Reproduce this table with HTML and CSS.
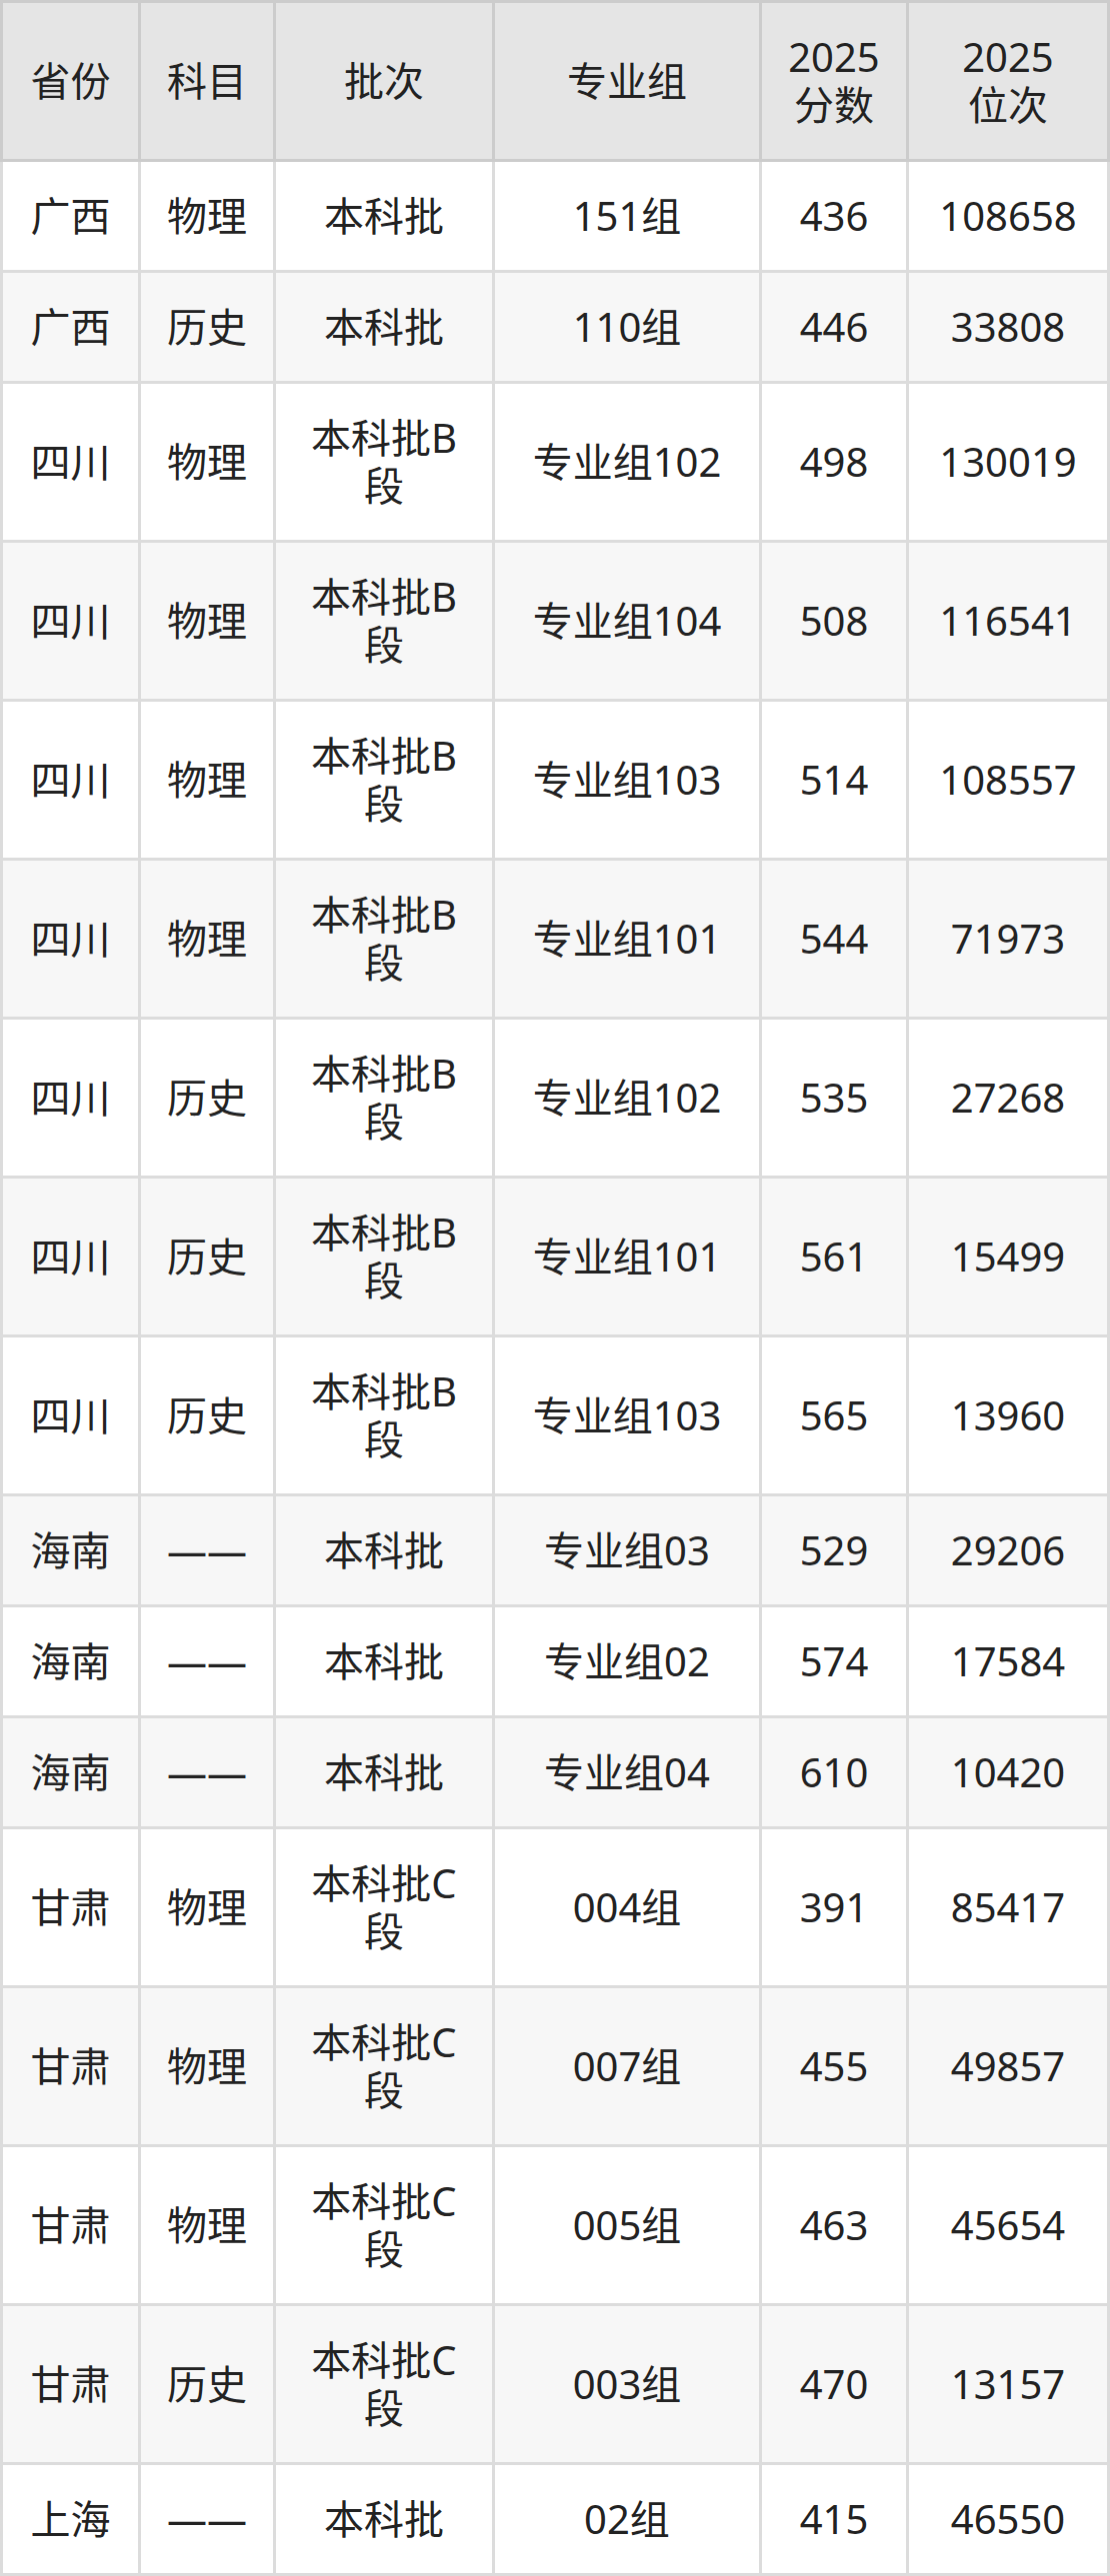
FILE: index.html
```html
<!DOCTYPE html>
<html lang="zh-CN">
<head>
<meta charset="utf-8">
<title>分数线</title>
<link rel="stylesheet" href="styles.css">
</head>
<body>
<table class="score-table">
  <colgroup>
    <col class="c-prov">
    <col class="c-subj">
    <col class="c-batch">
    <col class="c-group">
    <col class="c-score">
    <col class="c-rank">
  </colgroup>
  <thead>
    <tr>
      <th>省份</th>
      <th>科目</th>
      <th>批次</th>
      <th>专业组</th>
      <th>2025<br>分数</th>
      <th>2025<br>位次</th>
    </tr>
  </thead>
  <tbody>
    <tr><td>广西</td><td>物理</td><td>本科批</td><td>151组</td><td>436</td><td>108658</td></tr>
    <tr><td>广西</td><td>历史</td><td>本科批</td><td>110组</td><td>446</td><td>33808</td></tr>
    <tr><td>四川</td><td>物理</td><td>本科批B段</td><td>专业组102</td><td>498</td><td>130019</td></tr>
    <tr><td>四川</td><td>物理</td><td>本科批B段</td><td>专业组104</td><td>508</td><td>116541</td></tr>
    <tr><td>四川</td><td>物理</td><td>本科批B段</td><td>专业组103</td><td>514</td><td>108557</td></tr>
    <tr><td>四川</td><td>物理</td><td>本科批B段</td><td>专业组101</td><td>544</td><td>71973</td></tr>
    <tr><td>四川</td><td>历史</td><td>本科批B段</td><td>专业组102</td><td>535</td><td>27268</td></tr>
    <tr><td>四川</td><td>历史</td><td>本科批B段</td><td>专业组101</td><td>561</td><td>15499</td></tr>
    <tr><td>四川</td><td>历史</td><td>本科批B段</td><td>专业组103</td><td>565</td><td>13960</td></tr>
    <tr><td>海南</td><td>——</td><td>本科批</td><td>专业组03</td><td>529</td><td>29206</td></tr>
    <tr><td>海南</td><td>——</td><td>本科批</td><td>专业组02</td><td>574</td><td>17584</td></tr>
    <tr><td>海南</td><td>——</td><td>本科批</td><td>专业组04</td><td>610</td><td>10420</td></tr>
    <tr><td>甘肃</td><td>物理</td><td>本科批C段</td><td>004组</td><td>391</td><td>85417</td></tr>
    <tr><td>甘肃</td><td>物理</td><td>本科批C段</td><td>007组</td><td>455</td><td>49857</td></tr>
    <tr><td>甘肃</td><td>物理</td><td>本科批C段</td><td>005组</td><td>463</td><td>45654</td></tr>
    <tr><td>甘肃</td><td>历史</td><td>本科批C段</td><td>003组</td><td>470</td><td>13157</td></tr>
    <tr><td>上海</td><td>——</td><td>本科批</td><td>02组</td><td>415</td><td>46550</td></tr>
  </tbody>
</table>
</body>
</html>
```
FILE: styles.css
```css
html, body {
  margin: 0;
  padding: 0;
  background: #ffffff;
}

.score-table {
  width: 1110px;
  table-layout: fixed;
  border-collapse: collapse;
  font-family: "Noto Sans", "Noto Sans CJK SC", sans-serif;
  font-size: 40px;
  line-height: 48px;
  color: #222222;
}

.c-prov { width: 138px; }
.c-subj { width: 135px; }
.c-batch { width: 219px; }
.c-group { width: 267px; }
.c-score { width: 147px; }
.c-rank { width: 201px; }

.score-table th,
.score-table td {
  padding: 30px 20px;
  text-align: center;
  vertical-align: middle;
}

.score-table th {
  font-weight: normal;
  background: #e5e5e5;
  border: 3px solid #cccccc;
}

.score-table td {
  background: #ffffff;
  border: 3px solid #dcdcdc;
}

.score-table tbody tr:nth-child(even) td {
  background: #f7f7f7;
}
```
